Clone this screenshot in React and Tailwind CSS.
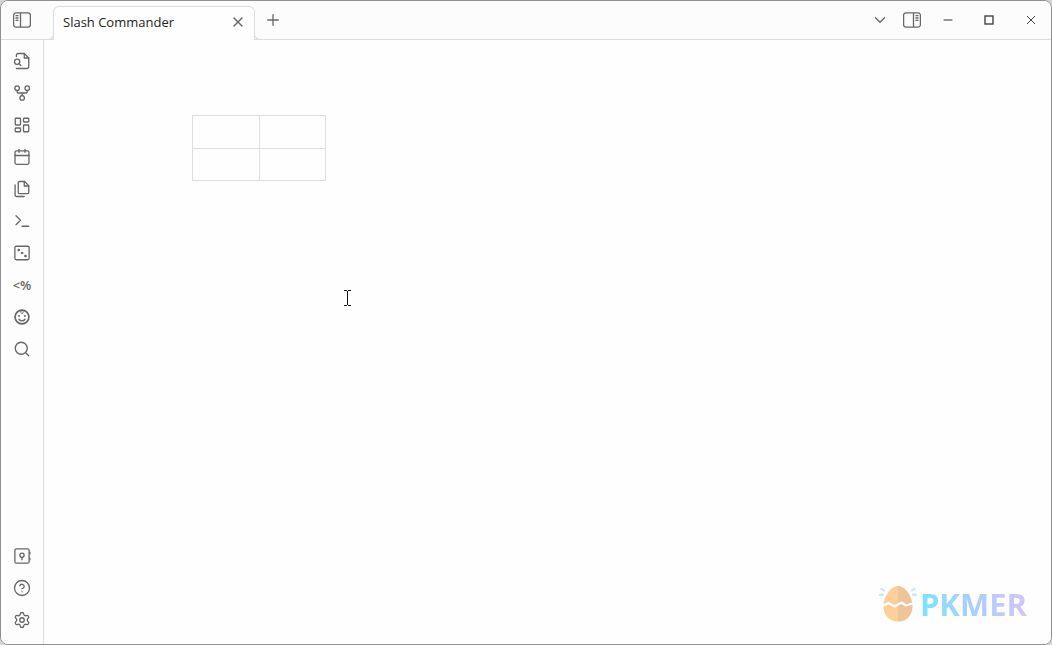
import React from "react";
import {
  ChevronDown,
  CircleHelp,
  LayoutDashboard,
  Minus,
  Plus,
  Search,
  Settings,
  X,
} from "lucide-react";

function Icon({ children, className = "size-[18px]" }) {
  return (
    <svg
      viewBox="0 0 24 24"
      className={className}
      fill="none"
      stroke="currentColor"
      strokeWidth="1.75"
      strokeLinecap="round"
      strokeLinejoin="round"
      aria-hidden="true"
    >
      {children}
    </svg>
  );
}

function PanelIcon({ side }) {
  return (
    <svg
      viewBox="0 0 18 16"
      className={side === "right" ? "h-4 w-[18px] -scale-x-100" : "h-4 w-[18px]"}
      fill="none"
      stroke="currentColor"
      strokeWidth="1.3"
      aria-hidden="true"
    >
      <rect x="0.6" y="0.9" width="16.8" height="14.2" rx="2.4" />
      <path d="M7.5 1v14M2.5 3.6h3M2.5 6h3M2.5 8.4h3" />
    </svg>
  );
}

const small = { size: 18, strokeWidth: 1.75 };

const topActions = [
  {
    label: "Open quick switcher",
    icon: (
      <Icon>
        <path d="M4.500 6V4.500A2.500 2.500 0 0 1 7 2h8l6 6v11.500a2.500 2.500 0 0 1-2.500 2.500H4.500" />
        <path d="M15 2v6h6" />
        <circle cx="5.500" cy="13" r="3.500" />
        <path d="m8 15.500 2.500 2.500" />
      </Icon>
    ),
  },
  {
    label: "Open graph view",
    icon: (
      <Icon>
        <circle cx="5.500" cy="5.500" r="3" />
        <circle cx="19" cy="5.500" r="3" />
        <circle cx="12.200" cy="18.500" r="3" />
        <path d="M5.500 8.500v2a1.500 1.500 0 0 0 1.500 1.500h10.500a1.500 1.500 0 0 0 1.500-1.500v-2M12.200 12v3.500" />
      </Icon>
    ),
  },
  { label: "Create new canvas", icon: <LayoutDashboard {...small} /> },
  {
    label: "Open daily note",
    icon: (
      <Icon>
        <rect x="2.700" y="3.800" width="18.600" height="18" rx="2" />
        <path d="M2.700 10h18.600M8 1.800v4M16 1.800v4" />
      </Icon>
    ),
  },
  {
    label: "Insert template",
    icon: (
      <Icon>
        <path d="M15.500 2H8.600A1.600 1.600 0 0 0 7 3.600v13A1.600 1.600 0 0 0 8.600 18.200h10.800a1.600 1.600 0 0 0 1.600-1.600V7.500z" />
        <path d="M15 2v6h6M2.800 6.500v13.700A1.800 1.800 0 0 0 4.600 22h10.400" />
      </Icon>
    ),
  },
  {
    label: "Open command palette",
    icon: (
      <Icon>
        <path d="m4 17 6-6-6-6M12 19h9" />
      </Icon>
    ),
  },
  {
    label: "Open random note",
    icon: (
      <Icon>
        <rect x="2.500" y="3" width="19" height="18" rx="2" />
        <g fill="currentColor" strokeWidth="1">
          <circle cx="7.500" cy="8" r="1.200" />
          <circle cx="12" cy="12" r="1.200" />
          <circle cx="16.500" cy="16" r="1.200" />
        </g>
      </Icon>
    ),
  },
  {
    label: "Templater",
    icon: <span className="text-[13px] leading-4 font-semibold">&lt;%</span>,
  },
  {
    label: "BRAT",
    icon: (
      <Icon>
        <circle cx="12" cy="12" r="9.200" strokeWidth="2.200" />
        <path d="M12 3c-2.500 1.500-2 4 0 4 1.500 0 2-1 1.500-2" strokeWidth="1.300" />
        <path d="M8 10.500h.2M15.800 10.500h.2" strokeWidth="2.400" />
        <path d="M8 15c2 2.800 6 2.800 8 0" />
      </Icon>
    ),
  },
  { label: "Search", icon: <Search {...small} /> },
];

const bottomActions = [
  {
    label: "Open another vault",
    icon: (
      <Icon>
        <rect x="2.500" y="2.500" width="19" height="19" rx="2" />
        <circle cx="12" cy="11" r="2.800" />
        <path d="M12 14v3M22.500 7v2M22.500 15v2" />
      </Icon>
    ),
  },
  { label: "Help", icon: <CircleHelp {...small} /> },
  { label: "Settings", icon: <Settings {...small} /> },
];

function RibbonButton({ label, icon }) {
  return (
    <button
      type="button"
      aria-label={label}
      className="flex h-8 w-full items-center justify-center"
    >
      {icon}
    </button>
  );
}

function Header() {
  return (
    <header className="flex h-[39px] shrink-0 border-b border-[#dcdcdc] bg-[#fcfcfc] text-[#666]">
      <button type="button" aria-label="Collapse left sidebar" className="flex w-[42px] items-center justify-center">
        <PanelIcon side="left" />
      </button>
      <div className="relative -mb-px ml-2.5 flex h-[34px] w-[202px] items-center justify-between self-end rounded-t-md border border-b-0 border-[#dcdcdc] bg-[#fefefe] pr-2 pb-[3px] pl-[9px] before:absolute before:bottom-0 before:-left-1.5 before:size-1.5 before:rounded-br-md before:border-r before:border-b before:border-[#dcdcdc] before:bg-[#fcfcfc] after:absolute after:-right-1.5 after:bottom-0 after:size-1.5 after:rounded-bl-md after:border-b after:border-l after:border-[#dcdcdc] after:bg-[#fcfcfc]">
        <span className="text-[13px] leading-5 text-[#222]">Slash Commander</span>
        <button type="button" aria-label="Close tab">
          <X size={16} strokeWidth={2} />
        </button>
      </div>
      <button type="button" aria-label="New tab" className="flex w-9 items-center justify-center">
        <Plus size={18} strokeWidth={1.75} />
      </button>
      <div className="-mr-px ml-auto flex">
        <button type="button" aria-label="List tabs" className="flex w-8 items-center justify-center">
          <ChevronDown size={18} strokeWidth={1.75} />
        </button>
        <button type="button" aria-label="Expand right sidebar" className="flex w-8 items-center justify-center">
          <PanelIcon side="right" />
        </button>
        <button type="button" aria-label="Minimize" className="flex w-10 items-center justify-center text-[#333]">
          <Minus size={14} strokeWidth={1.75} />
        </button>
        <button type="button" aria-label="Maximize" className="flex w-[42px] items-center justify-center text-[#444]">
          <svg viewBox="0 0 10 10" className="size-2.5" fill="none" stroke="currentColor" strokeWidth="1.400" aria-hidden="true">
            <rect x="1" y="1" width="8" height="8" />
          </svg>
        </button>
        <button type="button" aria-label="Close window" className="flex w-[42px] items-center justify-center text-[#444]">
          <svg viewBox="0 0 10 10" className="size-2.5" stroke="currentColor" aria-hidden="true">
            <path d="m1 1 8 8M9 1 1 9" />
          </svg>
        </button>
      </div>
    </header>
  );
}

function EggLogo() {
  return (
    <svg viewBox="0 0 40 38" className="h-[38px] w-10" aria-hidden="true">
      <path d="M20 1C13 1 5.500 11 5.500 21C5.500 30.500 11 36.500 20 36.500z" fill="#fccf9b" />
      <path d="M20 1C27 1 34.500 11 34.500 21C34.500 30.500 29 36.500 20 36.500z" fill="#edc598" />
      <path
        d="M4 21 10.500 18l6 3.500 7-4 4.500 3 7-2"
        fill="none"
        stroke="#fff"
        strokeWidth="2.200"
        strokeLinejoin="round"
      />
      <path
        d="m3.500 4 2.500 1.500M2 10l3-.5M36.500 4l-2.500 1.500M38 10l-3-.5"
        stroke="#d3e5f4"
        strokeWidth="2.400"
        strokeLinecap="round"
      />
    </svg>
  );
}

export default function App() {
  return (
    <div className="h-screen bg-[#d5d5d5] font-['Open_Sans','Noto_Sans',sans-serif]">
      <div className="relative flex h-full flex-col overflow-hidden rounded-lg border border-[#909090] bg-white">
        <Header />
        <div className="flex min-h-0 flex-1">
          <nav
            aria-label="Ribbon"
            className="flex w-[43px] shrink-0 flex-col justify-between border-r border-[#dcdcdc] bg-[#fdfdfd] pt-[5px] pb-2 text-[#666]"
          >
            <div>
              {topActions.map((action) => (
                <RibbonButton key={action.label} {...action} />
              ))}
            </div>
            <div>
              {bottomActions.map((action) => (
                <RibbonButton key={action.label} {...action} />
              ))}
            </div>
          </nav>
          <main className="flex min-w-0 flex-1 flex-col justify-between bg-[#fefefe]">
            <table
              aria-label="Empty note table"
              className="mt-[75px] ml-[148px] h-[66px] w-[134px] table-fixed border-collapse"
            >
              <tbody>
                {[0, 1].map((row) => (
                  <tr key={row} className="h-8">
                    <td className="border border-[#dedede]" />
                    <td className="border border-[#dedede]" />
                  </tr>
                ))}
              </tbody>
            </table>
            <div className="mr-6 mb-[21px] flex items-center gap-0.5 self-end">
              <EggLogo />
              <span className="bg-linear-to-r from-[#7be3ff] via-[#a9ceff] to-[#d3c4fb] bg-clip-text text-[31px] leading-9 font-bold text-transparent">
                PKMER
              </span>
            </div>
          </main>
        </div>
        <svg
          viewBox="0 0 7 16"
          className="absolute top-[289px] left-[343px] h-4 w-[7px]"
          stroke="#111"
          fill="none"
          shapeRendering="crispEdges"
          aria-hidden="true"
        >
          <path d="M0 .5h3M4 .5h3M3.500 1v14M0 15.500h3M4 15.500h3" />
        </svg>
      </div>
    </div>
  );
}
